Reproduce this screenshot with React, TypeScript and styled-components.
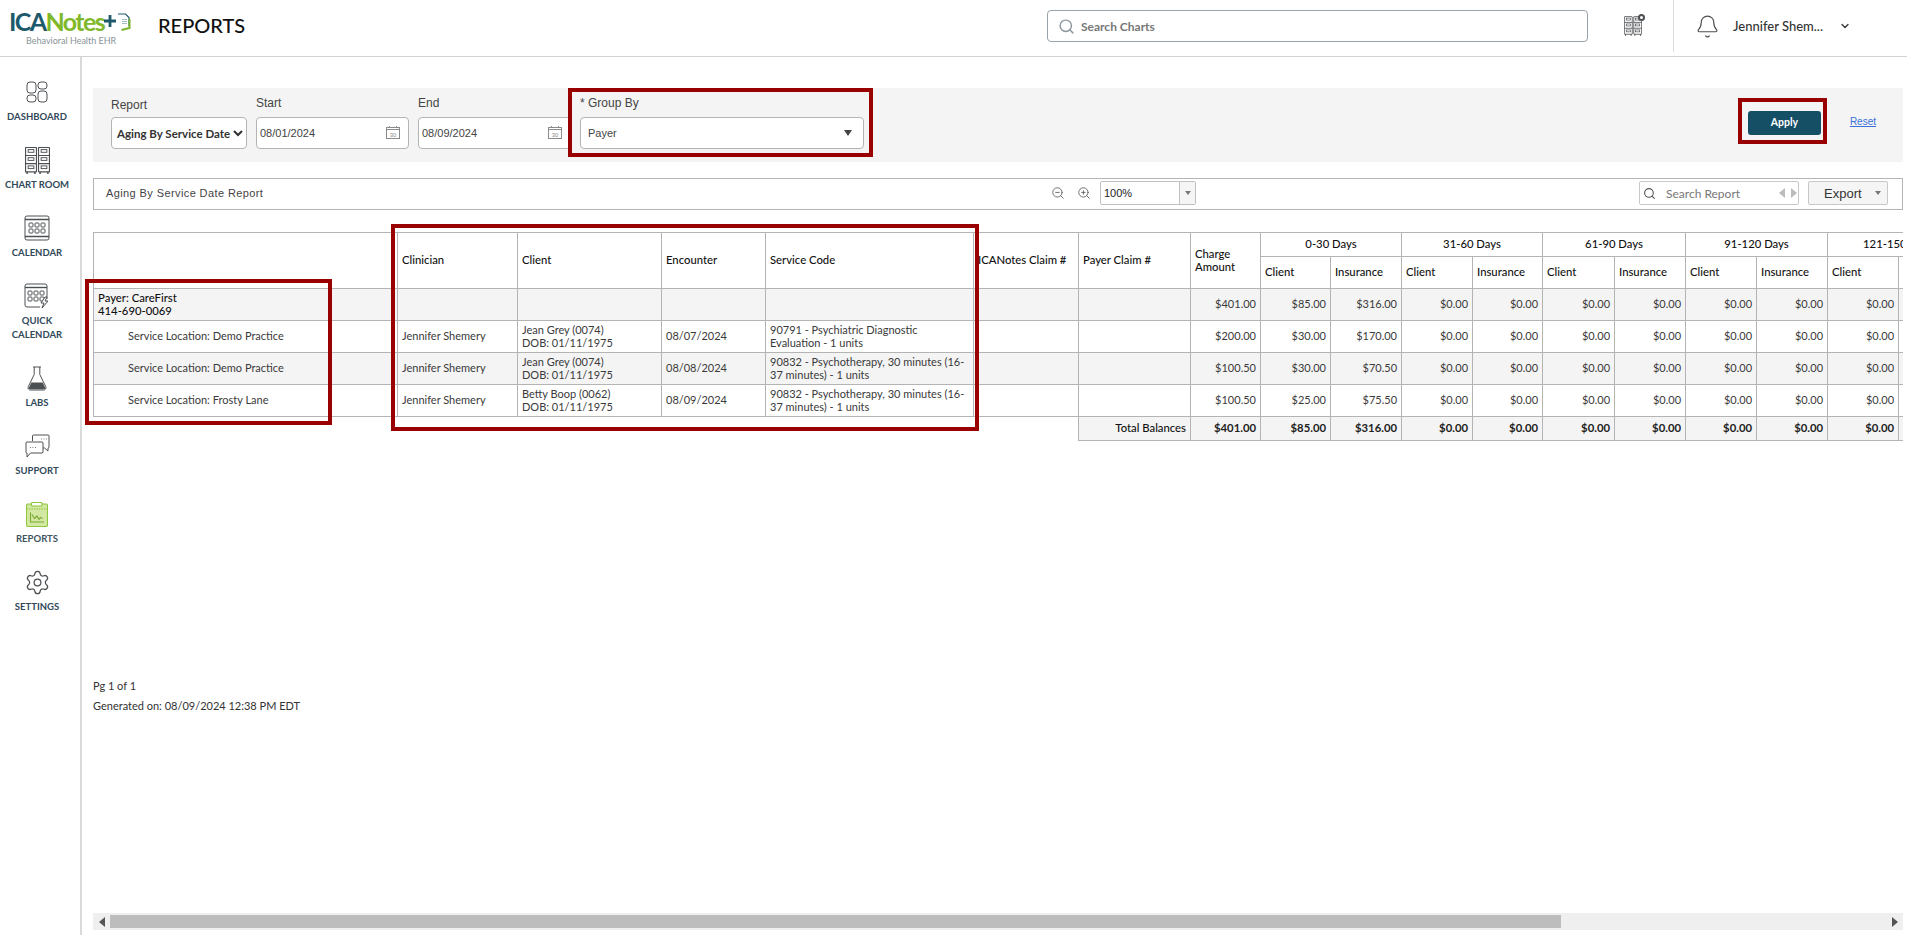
import React from "react";
import styled, { createGlobalStyle } from "styled-components";
import { Bell, ChevronDown, Search, Settings, ZoomIn, ZoomOut } from "lucide-react";

const GlobalStyle = createGlobalStyle`
  * { box-sizing: border-box; }
  html, body { margin: 0; padding: 0; background: #fff; }
  body { font-family: Lato, "Liberation Sans", sans-serif; color: #333; overflow: hidden; }
`;

const ICON = "#4d5052";
const LINE = "#b4b4b4";
const RED = "#990000";

const DashboardIcon = () => (
  <svg width="22" height="22" viewBox="0 0 22 22" fill="none" stroke={ICON} strokeWidth="1">
    <rect x="1" y="1" width="9" height="11" rx="3" />
    <rect x="12" y="1" width="9" height="7" rx="3" />
    <rect x="1" y="14" width="9" height="7" rx="3" />
    <rect x="12" y="10" width="9" height="11" rx="3" />
  </svg>
);

const ChartRoomIcon = ({ size = 25 }: { size?: number }) => (
  <svg width={size} height={size + 2} viewBox="0 0 24 26" fill="none" stroke={ICON} strokeWidth="1.1">
    {[0.5, 13].map((x) => (
      <g key={x}>
        <rect x={x} y="0.5" width="10.5" height="23.5" rx="0.5" />
        <path d={`M${x} 8.2h10.5M${x} 16h10.5`} />
        {[2.5, 10.3, 18.2].map((y) => (
          <rect key={y} x={x + 2.5} y={y} width="5.5" height="2.6" strokeWidth="0.9" />
        ))}
        <path d={`M${x + 1.5} 24v2M${x + 9} 24v2`} strokeWidth="1.4" />
      </g>
    ))}
  </svg>
);

const CalendarIcon = () => (
  <svg width="26" height="26" viewBox="0 0 26 26" fill="none" stroke={ICON} strokeWidth="1">
    <rect x="1" y="1" width="24" height="24" rx="2" />
    <path d="M1 4.5h24M1 21.5h24" strokeWidth="1.4" />
    {[5, 11, 17].map((x) =>
      [8, 14].map((y) => <rect key={`${x}-${y}`} x={x} y={y} width="4" height="4" rx="0.8" />)
    )}
  </svg>
);

const QuickCalendarIcon = () => (
  <svg width="26" height="26" viewBox="0 0 26 26" fill="none" stroke={ICON} strokeWidth="1">
    <path d="M16 24H3a2 2 0 0 1-2-2V3a2 2 0 0 1 2-2h18a2 2 0 0 1 2 2v13" />
    <path d="M1 4.5h22" strokeWidth="1.4" />
    {[4, 10, 16].map((x) =>
      [8, 14].map((y) => <rect key={`${x}-${y}`} x={x} y={y} width="4" height="4" rx="0.8" />)
    )}
    <path d="M21 14l-4 6h3l-2 5 6-7h-3l2-4z" fill="#fff" />
  </svg>
);

const LabsIcon = () => (
  <svg width="20" height="25" viewBox="0 0 20 25" fill="none" stroke={ICON} strokeWidth="1">
    <path d="M6 1h8M7.2 1v7.5L1.2 20.8A2.3 2.3 0 0 0 3.3 24h13.4a2.3 2.3 0 0 0 2.1-3.2L12.8 8.5V1" />
    <path d="M4.3 16.5h11.4l2.4 5a1.3 1.3 0 0 1-1.2 1.8H3.1a1.3 1.3 0 0 1-1.2-1.8z" fill={ICON} stroke="none" />
  </svg>
);

const SupportIcon = () => (
  <svg width="25" height="24" viewBox="0 0 25 24" fill="none" stroke={ICON} strokeWidth="1">
    <path d="M7.5 7V2a1 1 0 0 1 1-1H23a1 1 0 0 1 1 1v11a1 1 0 0 1-1 1v3l-3.5-3H18" />
    <path d="M2 8h15a1 1 0 0 1 1 1v9a1 1 0 0 1-1 1H5.5L2 23v-4a1 1 0 0 1-1-1V9a1 1 0 0 1 1-1z" fill="#fff" />
    <path d="M16 5h.8M18.500 5h.8M21 5h.8M5 13.500h.8M7.500 13.500h.8M10 13.500h.8" strokeWidth="0.9" />
  </svg>
);

const ReportsIcon = () => (
  <svg width="22" height="25" viewBox="0 0 22 25" fill="none" stroke="#8ec63f" strokeWidth="1.1">
    <rect x="0.5" y="2" width="21" height="22.5" rx="1.5" fill="#d3e8a2" />
    <rect x="5.5" y="0.5" width="10.5" height="3.5" rx="1" fill="#fff" />
    <path d="M0.5 7h21" strokeDasharray="1.5 1" />
    <path d="M4.5 10.5V20H18" stroke="#79a833" />
    <path d="M6 12.5l2.5 4 2.5-2.5 2 3.5 1.5-2 2 1" stroke="#79a833" />
  </svg>
);

const ChartsPlusIcon = () => (
  <IconStack>
    <ChartRoomIcon size={18} />
    <PlusDot />
  </IconStack>
);

const SmallCalendar = () => (
  <svg width="14" height="13" viewBox="0 0 14 13" fill="none" stroke="#8b8b8b" strokeWidth="1">
    <rect x="0.5" y="1.5" width="13" height="11" />
    <path d="M0.5 3.5h13M3.5 0v2M10.5 0v2" />
    <text x="7" y="10.5" fontSize="6" textAnchor="middle" fill="#8b8b8b" stroke="none" fontFamily="Liberation Sans">30</text>
  </svg>
);

const LogoMark = () => (
  <svg width="27" height="20" viewBox="0 0 27 20" fill="none">
    <path d="M0 10h12M6 4v12" stroke="#1d5a6c" strokeWidth="2.8" />
    <path d="M14 3h7.5L25 6.5V15" stroke="#1d5a6c" strokeWidth="1.2" />
    <path d="M25.5 8v9l-8 2" stroke="#79b22e" strokeWidth="2" />
    <path d="M18 8.5h5M18 10.500h5M18 12.500h5" stroke="#9ab7bf" strokeWidth="0.9" />
  </svg>
);

const navItems = [
  { label: "DASHBOARD", icon: <DashboardIcon /> },
  { label: "CHART ROOM", icon: <ChartRoomIcon /> },
  { label: "CALENDAR", icon: <CalendarIcon /> },
  { label: "QUICK CALENDAR", icon: <QuickCalendarIcon />, narrow: true },
  { label: "LABS", icon: <LabsIcon /> },
  { label: "SUPPORT", icon: <SupportIcon /> },
  { label: "REPORTS", icon: <ReportsIcon /> },
  { label: "SETTINGS", icon: <Settings size={27} strokeWidth={1.1} color={ICON} /> },
];

const columns = [304, 120, 144, 104, 208, 105, 112, 70, 70, 71, 71, 70, 72, 71, 71, 71, 71, 71];
const buckets = ["0-30 Days", "31-60 Days", "61-90 Days", "91-120 Days", "121-150 Days"];

const rows = [
  {
    location: "Payer: CareFirst",
    phone: "414-690-0069",
    isPayer: true,
    clinician: "",
    client: [],
    encounter: "",
    code: [],
    amounts: ["$401.00", "$85.00", "$316.00"],
  },
  {
    location: "Service Location: Demo Practice",
    clinician: "Jennifer Shemery",
    client: ["Jean Grey (0074)", "DOB: 01/11/1975"],
    encounter: "08/07/2024",
    code: ["90791 - Psychiatric Diagnostic", "Evaluation - 1 units"],
    amounts: ["$200.00", "$30.00", "$170.00"],
  },
  {
    location: "Service Location: Demo Practice",
    clinician: "Jennifer Shemery",
    client: ["Jean Grey (0074)", "DOB: 01/11/1975"],
    encounter: "08/08/2024",
    code: ["90832 - Psychotherapy, 30 minutes (16-", "37 minutes) - 1 units"],
    amounts: ["$100.50", "$30.00", "$70.50"],
  },
  {
    location: "Service Location: Frosty Lane",
    clinician: "Jennifer Shemery",
    client: ["Betty Boop (0062)", "DOB: 01/11/1975"],
    encounter: "08/09/2024",
    code: ["90832 - Psychotherapy, 30 minutes (16-", "37 minutes) - 1 units"],
    amounts: ["$100.50", "$25.00", "$75.50"],
  },
];

const zeros = Array.from({ length: 8 }, () => "$0.00");
const tableWidth = columns.reduce((sum, w) => sum + w, 0);

const Lines = ({ items }: { items: string[] }) => (
  <>
    {items.map((line) => (
      <div key={line}>{line}</div>
    ))}
  </>
);

export default function App() {
  return (
    <Page>
      <GlobalStyle />
      <Header>
        <Logo>
          <LogoTop>
            <LogoIca>ICA</LogoIca>
            <LogoNotes>Notes</LogoNotes>
            <LogoMark />
          </LogoTop>
          <LogoSub>Behavioral Health EHR</LogoSub>
        </Logo>
        <PageTitle>REPORTS</PageTitle>
        <ChartSearch>
          <Search size={17} strokeWidth={2} color="#8a959c" />
          <span>Search Charts</span>
        </ChartSearch>
        <ChartsPlusIcon />
        <UserArea>
          <Bell size={25} strokeWidth={1.1} color={ICON} />
          <UserName>Jennifer Shem...</UserName>
          <ChevronDown size={12} strokeWidth={2.5} color="#333" />
        </UserArea>
      </Header>

      <Body>
        <Sidebar>
          {navItems.map((item) => (
            <NavItem key={item.label} $active={item.label === "REPORTS"}>
              <NavIcon>{item.icon}</NavIcon>
              <NavLabel $narrow={item.narrow}>{item.label}</NavLabel>
            </NavItem>
          ))}
        </Sidebar>

        <Main>
          <FilterBar>
            <Field $width={136}>
              <FieldLabel $gap={5}>Report</FieldLabel>
              <ReportSelect defaultValue="aging">
                <option value="aging">Aging By Service Date Report</option>
              </ReportSelect>
            </Field>
            <Field $width={153}>
              <FieldLabel $gap={7}>Start</FieldLabel>
              <InputBox>
                <span>08/01/2024</span>
                <SmallCalendar />
              </InputBox>
            </Field>
            <Field $width={153}>
              <FieldLabel $gap={7}>End</FieldLabel>
              <InputBox>
                <span>08/09/2024</span>
                <SmallCalendar />
              </InputBox>
            </Field>
            <GroupBox>
              <FieldLabel $gap={7}>* Group By</FieldLabel>
              <GroupSelect>
                <span>Payer</span>
                <Caret />
              </GroupSelect>
            </GroupBox>
            <ApplyBox>
              <ApplyButton>Apply</ApplyButton>
            </ApplyBox>
            <ResetLink href="#reset">Reset</ResetLink>
          </FilterBar>

          <Toolbar>
            <ToolbarTitle>Aging By Service Date Report</ToolbarTitle>
            <ZoomIconButton>
              <ZoomOut size={14} strokeWidth={1.4} color="#555" />
            </ZoomIconButton>
            <ZoomIconButton>
              <ZoomIn size={14} strokeWidth={1.4} color="#555" />
            </ZoomIconButton>
            <ZoomBox>
              <span>100%</span>
              <ZoomArrow>
                <SmallCaret $color="#777" />
              </ZoomArrow>
            </ZoomBox>
            <ReportSearch>
              <Search size={13} strokeWidth={2} color="#555" />
              <span>Search Report</span>
              <PagerArrows>
                <PagerArrow $dir="left" />
                <PagerArrow $dir="right" />
              </PagerArrows>
            </ReportSearch>
            <ExportButton>
              Export
              <SmallCaret $color="#777" />
            </ExportButton>
          </Toolbar>

          <TableWrap>
            <TableClip>
              <ReportTable style={{ width: tableWidth }}>
                <colgroup>
                  {columns.map((w, i) => (
                    <col key={i} width={w} />
                  ))}
                </colgroup>
                <thead>
                  <tr>
                    <Th rowSpan={2} />
                    <Th rowSpan={2}>Clinician</Th>
                    <Th rowSpan={2}>Client</Th>
                    <Th rowSpan={2}>Encounter</Th>
                    <Th rowSpan={2}>Service Code</Th>
                    <Th rowSpan={2}>ICANotes Claim #</Th>
                    <Th rowSpan={2}>Payer Claim #</Th>
                    <Th rowSpan={2}>
                      Charge
                      <br />
                      Amount
                    </Th>
                    {buckets.map((b) => (
                      <BucketTh key={b} colSpan={2}>
                        {b}
                      </BucketTh>
                    ))}
                  </tr>
                  <SubHeadRow>
                    {buckets.flatMap((b) => [
                      <Th key={`${b}-c`}>Client</Th>,
                      <Th key={`${b}-i`}>Insurance</Th>,
                    ])}
                  </SubHeadRow>
                </thead>
                <tbody>
                  {rows.map((row, i) => (
                    <BodyRow key={i} $shaded={i % 2 === 0}>
                      <LocationCell $payer={row.isPayer}>
                        {row.location}
                        {row.phone && <div>{row.phone}</div>}
                      </LocationCell>
                      <Td>{row.clinician}</Td>
                      <Td>
                        <Lines items={row.client} />
                      </Td>
                      <Td>{row.encounter}</Td>
                      <Td>
                        <Lines items={row.code} />
                      </Td>
                      <Td />
                      <Td />
                      {[...row.amounts, ...zeros].map((a, j) => (
                        <MoneyCell key={j}>{a}</MoneyCell>
                      ))}
                    </BodyRow>
                  ))}
                  <TotalRow>
                    <BlankCell colSpan={6} />
                    <TotalLabel>Total Balances</TotalLabel>
                    {["$401.00", "$85.00", "$316.00", ...zeros].map((a, j) => (
                      <TotalMoney key={j}>{a}</TotalMoney>
                    ))}
                  </TotalRow>
                </tbody>
              </ReportTable>
            </TableClip>
            <Highlight $left={-8} $top={47} $width={247} $height={146} />
            <Highlight $left={298} $top={-8} $width={588} $height={207} />
          </TableWrap>

          <ReportFooter>
            <div>Pg 1 of 1</div>
            <div>Generated on: 08/09/2024 12:38 PM EDT</div>
          </ReportFooter>

          <ScrollTrack>
            <ScrollArrow>
              <PagerArrow $dir="left" />
            </ScrollArrow>
            <ScrollThumb />
            <ScrollArrow>
              <PagerArrow $dir="right" />
            </ScrollArrow>
          </ScrollTrack>
        </Main>
      </Body>
    </Page>
  );
}

const Page = styled.div`
  display: flex;
  flex-direction: column;
  height: 100vh;
  overflow: hidden;
`;

const Header = styled.header`
  display: flex;
  align-items: center;
  flex: 0 0 57px;
  padding-left: 9px;
  border-bottom: 1px solid #d2d2d2;
`;

const Logo = styled.div`
  display: flex;
  flex-direction: column;
  width: 149px;
  margin-top: -2px;
`;

const LogoTop = styled.div`
  display: flex;
  align-items: center;
  height: 27px;
  font-size: 25px;
  font-weight: 700;
  letter-spacing: -1.6px;
`;

const LogoIca = styled.span`
  color: #1d5a6c;
`;

const LogoNotes = styled.span`
  color: #7fb82a;
`;

const LogoSub = styled.div`
  margin-left: 17px;
  font-size: 9px;
  line-height: 12px;
  color: #8a9498;
`;

const PageTitle = styled.h1`
  margin: 0 0 6px;
  font-size: 20px;
  font-weight: 500;
  color: #111;
`;

const ChartSearch = styled.div`
  display: flex;
  align-items: center;
  gap: 6px;
  width: 541px;
  height: 32px;
  margin: 0 0 4px auto;
  padding-left: 10px;
  border: 1px solid #97a3ab;
  border-radius: 4px;
  font-size: 12px;
  font-weight: 700;
  color: #777;
`;

const IconStack = styled.div`
  position: relative;
  display: flex;
  margin: 0 0 4px 36px;
`;

const PlusDot = styled.span`
  position: absolute;
  top: -2px;
  right: -3px;
  width: 7px;
  height: 7px;
  border-radius: 50%;
  border: 2px solid #4d5052;
  background: #fff;
`;

const UserArea = styled.div`
  display: flex;
  align-items: center;
  align-self: flex-start;
  width: 234px;
  height: 52px;
  margin-left: 31px;
  padding-left: 21px;
  border-left: 1px solid #dcdcdc;
`;

const UserName = styled.span`
  width: 106px;
  margin-left: 13px;
  font-size: 13px;
  font-weight: 500;
  color: #333;
`;

const Body = styled.div`
  display: flex;
  flex: 1;
  min-height: 0;
`;

const Sidebar = styled.nav`
  display: flex;
  flex-direction: column;
  gap: 22px;
  flex: 0 0 82px;
  padding-top: 21px;
  padding-right: 6px;
  border-right: 2px solid #dadada;
`;

const NavItem = styled.a<{ $active?: boolean }>`
  display: flex;
  flex-direction: column;
  align-items: center;
  gap: 4px;
  color: ${(p) => (p.$active ? "#3f5560" : "#31495a")};
`;

const NavIcon = styled.div`
  display: flex;
  align-items: center;
  justify-content: center;
  height: 28px;
`;

const NavLabel = styled.span<{ $narrow?: boolean }>`
  font-size: 9.5px;
  font-weight: 700;
  line-height: 14px;
  text-align: center;
  white-space: ${(p) => (p.$narrow ? "normal" : "nowrap")};
  width: ${(p) => (p.$narrow ? "60px" : "auto")};
`;

const Main = styled.main`
  display: flex;
  flex-direction: column;
  flex: 1;
  min-width: 0;
  padding: 31px 4px 5px 11px;
`;

const FilterBar = styled.section`
  display: flex;
  align-items: flex-end;
  gap: 9px;
  flex: 0 0 73px;
  padding: 0 27px 13px 18px;
  background: #f4f4f4;
`;

const Field = styled.div<{ $width: number }>`
  display: flex;
  flex-direction: column;
  width: ${(p) => p.$width}px;
`;

const FieldLabel = styled.label<{ $gap: number }>`
  margin-bottom: ${(p) => p.$gap}px;
  font-family: "Liberation Sans", sans-serif;
  font-size: 12px;
  line-height: 14px;
  color: #444;
`;

const ReportSelect = styled.select`
  width: 100%;
  height: 32px;
  padding: 0 0 0 1px;
  border: 1px solid #b4b4b4;
  border-radius: 4px;
  background: #fff;
  font-family: Lato, sans-serif;
  font-size: 11.5px;
  font-weight: 700;
  color: #333;
`;

const InputBox = styled.div`
  display: flex;
  align-items: center;
  justify-content: space-between;
  height: 32px;
  padding: 0 8px 1px 3px;
  border: 1px solid #b4b4b4;
  border-radius: 4px;
  background: #fff;
  font-family: "Liberation Sans", sans-serif;
  font-size: 11px;
  color: #444;
`;

const GroupBox = styled.div`
  display: flex;
  flex-direction: column;
  width: 305px;
  margin: 0 0 -8px -12px;
  padding: 4px 5px 4px 8px;
  border: 4px solid ${RED};
`;

const GroupSelect = styled(InputBox)`
  padding: 0 11px 1px 7px;
`;

const Caret = styled.span`
  width: 0;
  height: 0;
  border-left: 4.5px solid transparent;
  border-right: 4.5px solid transparent;
  border-top: 6px solid #444;
`;

const ApplyBox = styled.div`
  width: 89px;
  height: 46px;
  margin: 0 0 5px auto;
  padding: 9px 2px 0 6px;
  border: 4px solid ${RED};
`;

const ApplyButton = styled.button`
  display: block;
  width: 73px;
  height: 24px;
  padding: 0 0 2px;
  border: none;
  border-radius: 3px;
  background: #154f66;
  color: #fff;
  font-family: Lato, sans-serif;
  font-size: 10.5px;
  font-weight: 700;
`;

const ResetLink = styled.a`
  margin: 0 0 20px 14px;
  font-family: "Liberation Sans", sans-serif;
  font-size: 10px;
  line-height: 14px;
  color: #3a6fd8;
  text-decoration: underline;
`;

const Toolbar = styled.section`
  display: flex;
  align-items: center;
  flex: 0 0 32px;
  margin-top: 16px;
  padding: 0 14px 2px 0;
  border: 1px solid ${LINE};
`;

const ToolbarTitle = styled.div`
  flex: 0 0 951px;
  padding-left: 12px;
  font-family: "Liberation Sans", sans-serif;
  font-size: 11px;
  letter-spacing: 0.4px;
  color: #444;
`;

const ZoomIconButton = styled.span`
  display: flex;
  justify-content: center;
  width: 26px;
`;

const ZoomBox = styled.div`
  display: flex;
  align-items: center;
  justify-content: space-between;
  width: 96px;
  height: 24px;
  margin-left: 3px;
  padding-left: 3px;
  border: 1px solid #c0c0c0;
  border-radius: 2px;
  font-family: "Liberation Sans", sans-serif;
  font-size: 11px;
  color: #222;
`;

const ZoomArrow = styled.span`
  display: flex;
  align-items: center;
  justify-content: center;
  width: 16px;
  height: 100%;
  border-left: 1px solid #c0c0c0;
  background: #f5f5f5;
`;

const SmallCaret = styled.span<{ $color: string }>`
  width: 0;
  height: 0;
  border-left: 3px solid transparent;
  border-right: 3px solid transparent;
  border-top: 4px solid ${(p) => p.$color};
`;

const ReportSearch = styled.div`
  display: flex;
  align-items: center;
  width: 160px;
  height: 24px;
  margin-left: auto;
  padding-left: 3px;
  border: 1px solid #c8c8c8;
  border-radius: 2px;
  font-size: 12px;
  color: #777;

  span:first-of-type {
    margin-left: 10px;
  }
`;

const PagerArrows = styled.span`
  display: flex;
  gap: 6px;
  margin-left: 29px;

  span {
    border-left-color: #bcbcbc;
    border-right-color: #bcbcbc;
  }
`;

const PagerArrow = styled.span<{ $dir: "left" | "right" }>`
  width: 0;
  height: 0;
  border-top: 5px solid transparent;
  border-bottom: 5px solid transparent;
  ${(p) => (p.$dir === "left" ? "border-right" : "border-left")}: 6px solid #9a9a9a;
`;

const ExportButton = styled.button`
  display: flex;
  align-items: center;
  justify-content: space-between;
  width: 80px;
  height: 24px;
  margin-left: 9px;
  padding: 0 6px 0 15px;
  border: 1px solid #c8c8c8;
  border-radius: 2px;
  background: #f5f5f5;
  font-family: "Liberation Sans", sans-serif;
  font-size: 13px;
  color: #333;
`;

const TableWrap = styled.div`
  position: relative;
  flex: 0 0 209px;
  margin-top: 22px;
`;

const TableClip = styled.div`
  overflow: hidden;
`;

const ReportTable = styled.table`
  border-collapse: collapse;
  table-layout: fixed;
  font-size: 11px;
  line-height: 13px;
`;

const Th = styled.th`
  height: 32px;
  padding: 0 4px 2px;
  border: 1px solid ${LINE};
  font-size: 11.3px;
  font-weight: 500;
  text-align: left;
  white-space: nowrap;
  color: #111;
`;

const BucketTh = styled(Th)`
  height: 24px;
  text-align: center;
`;

const SubHeadRow = styled.tr`
  height: 32px;
`;

const BodyRow = styled.tr<{ $shaded: boolean }>`
  height: 32px;
  background: ${(p) => (p.$shaded ? "#f4f4f4" : "#fff")};
`;

const Td = styled.td`
  padding: 0 4px 2px;
  border: 1px solid ${LINE};
  color: #3a3a3a;
  white-space: nowrap;
`;

const LocationCell = styled(Td)<{ $payer?: boolean }>`
  padding-left: ${(p) => (p.$payer ? "4px" : "34px")};
  font-size: ${(p) => (p.$payer ? "11.3px" : "11px")};
  font-weight: ${(p) => (p.$payer ? 500 : 400)};
  color: ${(p) => (p.$payer ? "#111" : "#3a3a3a")};
`;

const MoneyCell = styled(Td)`
  text-align: right;
`;

const TotalRow = styled.tr`
  height: 24px;
  background: #f4f4f4;
`;

const BlankCell = styled.td`
  background: #fff;
  border: none;
`;

const TotalLabel = styled(MoneyCell)`
  font-size: 11.3px;
  font-weight: 500;
  color: #111;
`;

const TotalMoney = styled(MoneyCell)`
  font-weight: 700;
  font-size: 11.3px;
  color: #222;
`;

const Highlight = styled.div<{ $left: number; $top: number; $width: number; $height: number }>`
  position: absolute;
  left: ${(p) => p.$left}px;
  top: ${(p) => p.$top}px;
  width: ${(p) => p.$width}px;
  height: ${(p) => p.$height}px;
  border: 4px solid ${RED};
  pointer-events: none;
`;

const ReportFooter = styled.footer`
  display: flex;
  flex-direction: column;
  gap: 6px;
  margin-top: 238px;
  font-size: 11px;
  line-height: 14px;
  color: #333;
`;

const ScrollTrack = styled.div`
  display: flex;
  align-items: center;
  flex: 0 0 17px;
  margin-top: auto;
  background: #efefef;
`;

const ScrollArrow = styled.span`
  display: flex;
  align-items: center;
  justify-content: center;
  width: 17px;

  &:last-child {
    margin-left: auto;
  }

  span {
    border-left-color: #555;
    border-right-color: #555;
  }
`;

const ScrollThumb = styled.div`
  width: 1451px;
  height: 13px;
  background: #bdbdbd;
`;
